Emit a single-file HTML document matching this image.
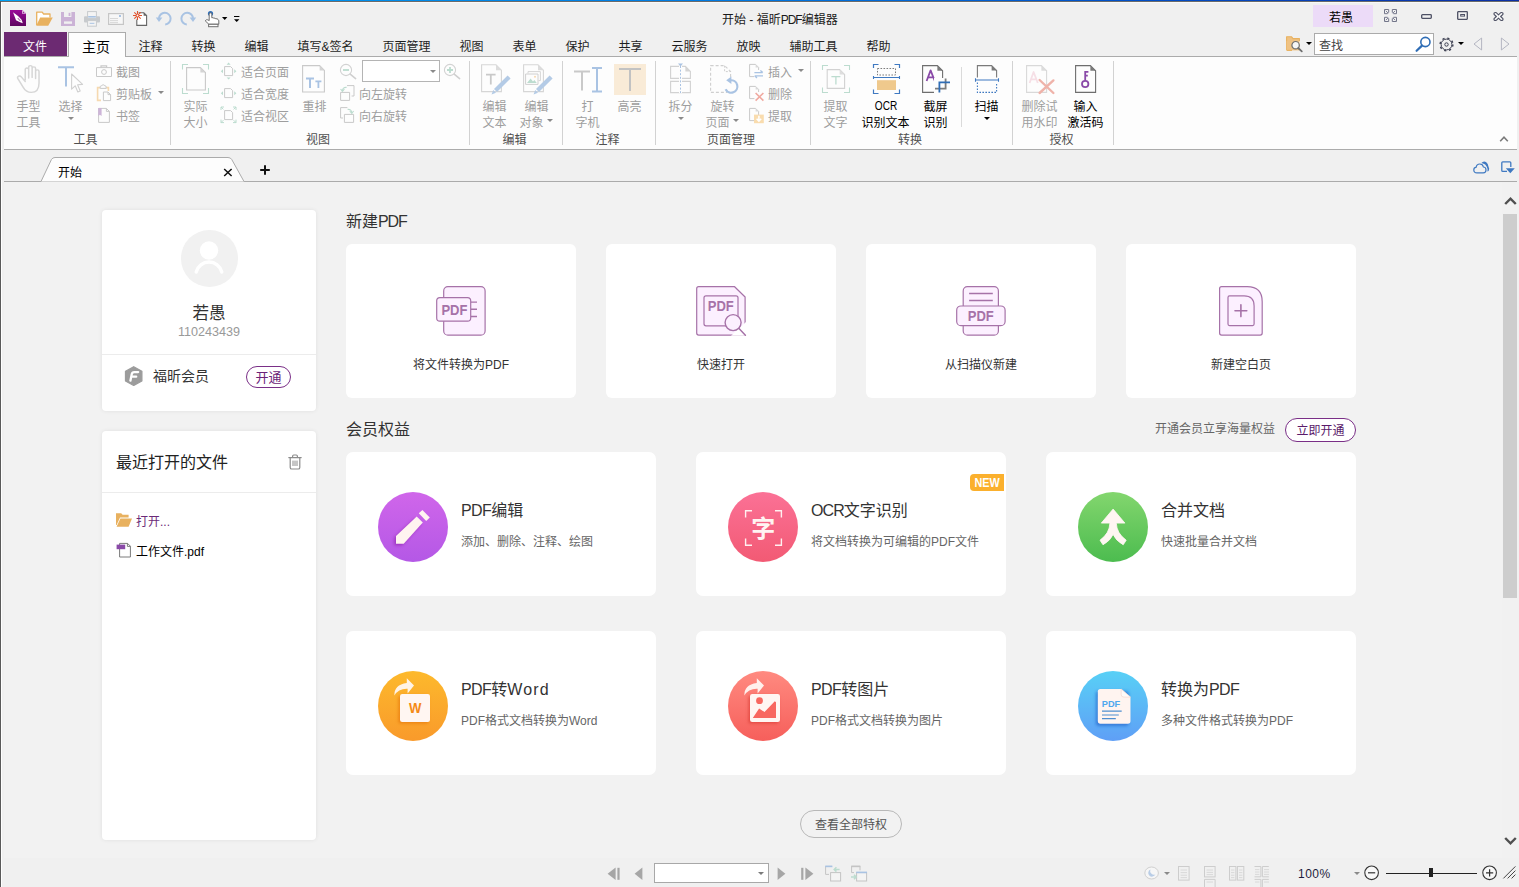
<!DOCTYPE html>
<html lang="zh-CN">
<head>
<meta charset="utf-8">
<title>开始 - 福昕PDF编辑器</title>
<style>
*{box-sizing:border-box;margin:0;padding:0}
html,body{width:1519px;height:887px;overflow:hidden;background:#f0f0f0}
body{font-family:"Liberation Sans","Noto Sans CJK SC",sans-serif;font-size:12px;color:#000}
#win{position:relative;width:1519px;height:887px;overflow:hidden;background:#f0f0f0}
.abs{position:absolute}
.t{position:absolute;white-space:nowrap;line-height:1}
svg{position:absolute;overflow:visible}
/* frame */
#topb{left:0;top:0;width:1519px;height:1px;background:linear-gradient(90deg,#00a2f5 0%,#0079e1 48%,#0050c8 74%,#0b2fa5 100%)}
#topw{left:1px;top:2px;width:1518px;height:1px;background:#f9f9f9}
#topg{left:0;top:1px;width:1519px;height:1px;background:#6b6b6b}
#leftg{left:0;top:1px;width:1px;height:886px;background:#5a5a5a}
#leftw{left:1px;top:2px;width:1px;height:885px;background:#fff}
/* tabs */
#filetab{left:4px;top:32px;width:63px;height:24px;background:#6c2a72}
#hometab{left:68px;top:32px;width:58px;height:25px;background:#fdfdfd;border:1px solid #ababab;border-bottom:none}
.tab{top:41px;font-size:12px;color:#1e1e1e;margin-left:0.5px}
/* ribbon */
#ribbon{left:4px;top:56px;width:1513px;height:94px;background:#fdfdfd;border-top:1px solid #ababab;border-bottom:1px solid #ababab}
.sep{width:1px;background:#d4d4d4;top:61px;height:84px}
.gl{top:134px;font-size:12px;color:#505050;transform:translateX(-50%)}
.rl{font-size:12px;color:#9e9e9e;transform:translateX(-50%);text-align:center;line-height:16px;top:98px}
.rl.on{color:#000}
.sl{font-size:12px;color:#9e9e9e}
.arr{width:0;height:0;border-left:3px solid transparent;border-right:3px solid transparent;border-top:3px solid #8a8a8a}
/* doc tabs */
#docline{left:4px;top:181px;width:1513px;height:1px;background:#ababab}
/* content */
#content{left:4px;top:182px;width:1498px;height:676px;background:#f2f2f2}
#sbar{left:1502px;top:182px;width:17px;height:676px;background:#f1f1f1}
#thumb{left:1503px;top:214px;width:14px;height:384px;background:#cdcdcd}
.card{position:absolute;background:#fff;border-radius:4px;box-shadow:0 0 4px rgba(0,0,0,.08)}
.ncard{position:absolute;background:#fff;border-radius:6px;width:230px;height:154px;top:244px}
.ncard .t{top:358px;font-size:12px;color:#333}
.fcard{position:absolute;background:#fff;border-radius:7px;width:310px;height:144px}
.h16{font-size:16px;color:#333}
.ft{font-size:16px;color:#333}
.fs{font-size:12px;color:#666}
.circ{position:absolute;width:70px;height:70px;border-radius:50%}
</style>
</head>
<body>
<div id="win">
<div class="abs" id="topb"></div><div class="abs" id="topg"></div><div class="abs" id="topw"></div><div class="abs" id="leftg"></div><div class="abs" id="leftw"></div>

<!-- TITLEBAR -->
<div class="t" style="left:722px;top:14px;font-size:12px;color:#1a1a1a">开始 - 福昕<span style="letter-spacing:-1px">PDF</span>编辑器</div>
<div class="abs" style="left:1313px;top:5px;width:60px;height:22px;background:#ecdbf8"></div>
<div class="t" style="left:1329px;top:12px;font-size:12px;color:#000">若愚</div>
<!-- quick access -->
<svg style="left:10px;top:10px" width="16" height="16" viewBox="0 0 16 16"><defs><linearGradient id="lg1" x1="0" y1="0" x2="0" y2="1"><stop offset="0" stop-color="#9a0a98"/><stop offset="1" stop-color="#5e0560"/></linearGradient></defs><path d="M0 0 H12.4 L16 3.6 V16 H0 Z" fill="url(#lg1)"/><path d="M12.2 0 V3.8 H16 Z" fill="#f4e6f4"/><path d="M12.9 1.4 V3.2 H14.7 Z" fill="#8a0a88"/><path d="M3 2.2 Q8.4 5.6 11.6 9.8 L12.8 13.2 L9.6 12 L6 10.2 Z" fill="#fff"/><path d="M7.8 8.2 L10.4 10.8" stroke="#b070b0" stroke-width="1.1"/></svg>
<svg style="left:36px;top:11px" width="17" height="15" viewBox="0 0 17 15"><path d="M0.7 14 V1.2 H6.2 L7.6 3 H14 V6.4" fill="#fff" stroke="#e8b15f" stroke-width="1.3" stroke-linejoin="round"/><path d="M4.2 6.6 H16.8 L12.2 14.8 H0.2 Z" fill="#e8b15f"/></svg>
<svg style="left:61px;top:12px" width="14" height="14" viewBox="0 0 14 14"><path d="M0 0 H14 V14 H0 Z" fill="#cbb2d6"/><rect x="3" y="0" width="7.4" height="5" fill="#f0f0f0"/><rect x="7.6" y="0.8" width="1.8" height="3.2" fill="#cbb2d6"/><rect x="3" y="9.4" width="8" height="2.4" fill="#f0f0f0"/></svg>
<svg style="left:84px;top:11px" width="16" height="16" viewBox="0 0 16 16"><rect x="0" y="5.2" width="16" height="6.4" rx="1" fill="#c7cacd"/><rect x="3.6" y="0.6" width="8.8" height="7" fill="#f4f4f4" stroke="#c7cacd" stroke-width="1"/><rect x="4.2" y="5" width="7.6" height="1.6" fill="#a9c3e3"/><rect x="3.6" y="9.6" width="8.8" height="5.6" fill="#f4f4f4" stroke="#c7cacd" stroke-width="1"/><rect x="5.6" y="11.8" width="4.8" height="1" fill="#a9c3e3"/></svg>
<svg style="left:108px;top:13px" width="16" height="12" viewBox="0 0 16 12"><rect x="0.6" y="0.6" width="14.8" height="10.8" fill="#f7f7f7" stroke="#c6c6c6" stroke-width="1.2"/><path d="M2 5.5 H10 M2 7.6 H10 M2 9.6 H10" stroke="#d4d4d4" stroke-width="0.9"/><rect x="11" y="2" width="2" height="2" fill="#a9c3e3"/></svg>
<svg style="left:133px;top:10px" width="15" height="17" viewBox="0 0 15 17"><path d="M5.6 2.8 H10.8 L13.6 5.6 V15.4 H3.8 V9.6" fill="#fff" stroke="#666" stroke-width="1.1"/><path d="M10.6 2.6 V5.8 H13.8 Z" fill="#666"/><rect x="0" y="1" width="9.6" height="9.6" fill="none"/><path d="M4.5 1 V10 M0 5.5 H9 M1.3 2.3 L7.7 8.7 M7.7 2.3 L1.3 8.7" stroke="#e0522d" stroke-width="1.1"/><circle cx="4.5" cy="5.5" r="0.9" fill="#fff"/></svg>
<svg style="left:155px;top:10px" width="18" height="17" viewBox="0 0 18 17"><path d="M4 8.6 A5.8 5.8 0 1 1 10.2 14.4" fill="none" stroke="#a9c3e3" stroke-width="2"/><path d="M0.8 7.6 H7.4 L4 12 Z" fill="#a9c3e3"/></svg>
<svg style="left:179px;top:10px" width="18" height="17" viewBox="0 0 18 17"><path d="M14 8.6 A5.8 5.8 0 1 0 7.8 14.4" fill="none" stroke="#a9c3e3" stroke-width="2"/><path d="M17.2 7.6 H10.6 L14 12 Z" fill="#a9c3e3"/></svg>
<svg style="left:204px;top:10px" width="16" height="18" viewBox="0 0 16 18"><circle cx="6.5" cy="3.5" r="2.6" fill="#2f6db5"/><path d="M5.2 10.6 V4.2 Q5.2 2.9 6.5 2.9 Q7.8 2.9 7.8 4.2 V7.8 Q9.2 7.2 9.8 8.2 Q11.2 7.8 11.8 8.8 Q13.2 8.4 14 9.4 Q14.8 10 14.8 11 V14.2 H4.8 L1.2 10.8 Q2.4 9.2 3.8 9.8 Z" fill="#fff" stroke="#707070" stroke-width="1" stroke-linejoin="round"/><rect x="4.6" y="14.3" width="9.4" height="2.4" fill="#fff" stroke="#707070" stroke-width="1"/></svg>
<svg style="left:222px;top:17px" width="6" height="3" viewBox="0 0 6 3"><path d="M0 0 H5.4 L2.7 3 Z" fill="#000"/></svg>
<svg style="left:234px;top:16px" width="6" height="7" viewBox="0 0 6 7"><path d="M0 0.5 H5.4" stroke="#000" stroke-width="1"/><path d="M0 3.2 H5.4 L2.7 6 Z" fill="#000"/></svg>

<!-- window controls -->
<svg style="left:1384px;top:9px" width="13" height="13" viewBox="0 0 13 13"><path d="M0.5 0.5 H4.7 V4.7 H0.5 Z M8.3 0.5 H12.5 V4.7 H8.3 Z M0.5 8.3 H4.7 V12.5 H0.5 Z M8.3 8.3 H12.5 V12.5 H8.3 Z" fill="none" stroke="#73768a" stroke-width="1"/><path d="M1.8 1.8 L4.4 4.4 M11.2 1.8 L8.6 4.4 M1.8 11.2 L4.4 8.6 M11.2 11.2 L8.6 8.6" fill="none" stroke="#73768a" stroke-width="0.9"/><path d="M3.6 5.2 H5.2 V3.6 M9.4 5.2 H7.8 V3.6 M3.6 7.8 H5.2 V9.4 M9.4 7.8 H7.8 V9.4" stroke="#f0f0f0" stroke-width="1.5" fill="none"/></svg>
<svg style="left:1421px;top:14px" width="11" height="5" viewBox="0 0 11 5"><rect x="0.7" y="0.7" width="9.6" height="3.6" rx="0.8" fill="none" stroke="#4d5064" stroke-width="1.3"/></svg>
<svg style="left:1457px;top:11px" width="11" height="9" viewBox="0 0 11 9"><rect x="0.7" y="0.7" width="9.6" height="7.6" rx="0.5" fill="none" stroke="#4d5064" stroke-width="1.3"/><rect x="3.7" y="3.5" width="3.8" height="1.6" fill="none" stroke="#4d5064" stroke-width="1"/></svg>
<svg style="left:1493px;top:12px" width="11" height="9" viewBox="0 0 13 10" preserveAspectRatio="none"><path d="M1.2 1.4 Q3 -0.4 4.8 1.6 L6.5 3.2 L8.2 1.6 Q10 -0.4 11.8 1.4 Q12.4 2.4 11 3.4 L9 5 L11 6.6 Q12.4 7.6 11.8 8.6 Q10 10.4 8.2 8.4 L6.5 6.8 L4.8 8.4 Q3 10.4 1.2 8.6 Q0.6 7.6 2 6.6 L4 5 L2 3.4 Q0.6 2.4 1.2 1.4 Z" fill="#f8f8f8" stroke="#4d5064" stroke-width="1.3" stroke-linejoin="round"/></svg>


<!-- TAB ROW -->
<div class="abs" id="filetab"></div>
<div class="t" style="left:23px;top:41px;font-size:12px;color:#fff">文件</div>
<div class="abs" id="hometab"></div>
<div class="t" style="left:82px;top:39.5px;font-size:14px;color:#000">主页</div>
<div class="t tab" style="left:138px">注释</div>
<div class="t tab" style="left:191px">转换</div>
<div class="t tab" style="left:244px">编辑</div>
<div class="t tab" style="left:297px">填写&amp;签名</div>
<div class="t tab" style="left:382px">页面管理</div>
<div class="t tab" style="left:459px">视图</div>
<div class="t tab" style="left:512px">表单</div>
<div class="t tab" style="left:565px">保护</div>
<div class="t tab" style="left:618px">共享</div>
<div class="t tab" style="left:671px">云服务</div>
<div class="t tab" style="left:736px">放映</div>
<div class="t tab" style="left:789px">辅助工具</div>
<div class="t tab" style="left:866px">帮助</div>
<!-- search area -->
<svg style="left:1286px;top:36px" width="17" height="16" viewBox="0 0 17 16"><path d="M0.6 14 V0.8 H5.6 L7 2.6 H13.4 V5" fill="#efc283" stroke="#e8b15f" stroke-width="1.1" stroke-linejoin="round"/><path d="M0.6 5 H13.4 V14.4 H0.6 Z" fill="#efc283"/><path d="M0.6 14.4 H6" stroke="#e8b15f" stroke-width="1.1"/><circle cx="9.6" cy="9.2" r="3.7" fill="#f6f6f6" stroke="#6e6e6e" stroke-width="1.2"/><path d="M12.2 12 L15.8 15.4" stroke="#6e6e6e" stroke-width="1.8" stroke-linecap="round"/></svg>
<svg style="left:1305.5px;top:42px" width="6" height="3" viewBox="0 0 6 3"><path d="M0 0 H6 L3 3 Z" fill="#000"/></svg>
<div class="abs" style="left:1314px;top:33px;width:120px;height:22px;background:#fff;border:1px solid #ababab"></div>
<div class="t" style="left:1319px;top:39.5px;font-size:12px;color:#444">查找</div>
<svg style="left:1415px;top:36px" width="17" height="16" viewBox="0 0 17 16"><circle cx="10.4" cy="6" r="4.6" fill="none" stroke="#2f6db5" stroke-width="1.6"/><path d="M7 9.6 L1.6 14.8" stroke="#2f6db5" stroke-width="2.2" stroke-linecap="round"/></svg>
<svg style="left:1439px;top:37px" width="15" height="15" viewBox="0 0 15 15"><circle cx="7.5" cy="7.5" r="5.4" fill="none" stroke="#3d4052" stroke-width="1"/><circle cx="7.5" cy="7.5" r="1.7" fill="none" stroke="#3d4052" stroke-width="1"/><circle cx="7.5" cy="7.5" r="6.4" fill="none" stroke="#3d4052" stroke-width="1.4" stroke-dasharray="2.2 2.83"/></svg>
<svg style="left:1457.5px;top:42px" width="6" height="3" viewBox="0 0 6 3"><path d="M0 0 H6 L3 3 Z" fill="#000"/></svg>
<svg style="left:1473px;top:37px" width="10" height="14" viewBox="0 0 10 14"><path d="M8.6 1 V13 L1 7 Z" fill="none" stroke="#b4b6c2" stroke-width="1"/></svg>
<svg style="left:1500px;top:37px" width="10" height="14" viewBox="0 0 10 14"><path d="M1.4 1 V13 L9 7 Z" fill="none" stroke="#b4b6c2" stroke-width="1"/></svg>


<!-- RIBBON -->
<div class="abs" id="ribbon"></div>
<div class="abs" style="left:69px;top:56px;width:56px;height:1px;background:#fdfdfd"></div>
<svg style="left:16px;top:64px" width="26" height="30" viewBox="0 0 26 30"><path transform="translate(-0.2,0) scale(1.15,1)" d="M8.2 16 V5.6 Q8.2 4 9.7 4 Q11.2 4 11.2 5.6 V14 M11.2 13 V3.2 Q11.2 1.6 12.7 1.6 Q14.2 1.6 14.2 3.2 V13 M14.2 13.4 V4.4 Q14.2 2.8 15.7 2.8 Q17.2 2.8 17.2 4.4 V14 M17.2 14.6 V7.4 Q17.2 5.8 18.7 5.8 Q20.2 5.8 20.2 7.4 V19 Q20.2 28.4 13.4 28.4 Q9 28.4 6.6 23.6 L1.8 14.6 Q1 13 2.4 12.2 Q3.8 11.6 5 13.2 L8.2 17.6" fill="none" stroke="#d6d6d6" stroke-width="1.3" stroke-linejoin="round" stroke-linecap="round"/></svg>
<div class="t rl" style="left:28.5px;top:99px">手型</div>
<div class="t rl" style="left:28.5px;top:114.5px">工具</div>
<svg style="left:57px;top:64px" width="28" height="30" viewBox="0 0 28 30"><path d="M1 3.2 H17 M9 3.2 V22.6" stroke="#a9c3e3" stroke-width="2" fill="none"/><path d="M14.6 10 L25.6 20.4 L20.6 20.8 L23.2 27 L20.8 28 L18.2 21.8 L14.6 25.2 Z" fill="#fdfdfd" stroke="#d0d0d0" stroke-width="1.1" stroke-linejoin="round"/></svg>
<div class="t rl" style="left:70.5px;top:99px">选择</div>
<svg style="left:67.5px;top:117px" width="6" height="3" viewBox="0 0 6 3"><path d="M0 0 H6 L3.0 3 Z" fill="#8a8a8a"/></svg>
<svg style="left:96px;top:65px" width="16" height="13" viewBox="0 0 16 13"><path d="M0.5 2.6 H15.5 V11.5 H0.5 Z" fill="none" stroke="#c9c9c9" stroke-width="1"/><path d="M5 2.4 V0.9 H10.6 V2.4" fill="none" stroke="#c9c9c9" stroke-width="1.2"/><circle cx="8" cy="7" r="2.4" fill="none" stroke="#c9c9c9" stroke-width="1"/></svg>
<div class="t sl" style="left:116px;top:67px;color:#9e9e9e">截图</div>
<svg style="left:96px;top:85px" width="16" height="17" viewBox="0 0 16 17"><path d="M4 2.6 H1.6 V15.4 H5" fill="none" stroke="#f6d9b0" stroke-width="1.6"/><path d="M10.4 2.6 H12.4 V6" fill="none" stroke="#f6d9b0" stroke-width="1.6"/><path d="M4.2 3.4 V1.8 Q4.2 0.8 5.6 0.8 Q6 -0.2 7.2 -0.2 Q8.4 -0.2 8.8 0.8 Q10.2 0.8 10.2 1.8 V3.4 Z" fill="#fdfdfd" stroke="#c9c9c9" stroke-width="1"/><path d="M7.4 7 H12 L14.6 9.6 V15.6 H7.4 Z" fill="#fdfdfd" stroke="#c9c9c9" stroke-width="1"/><path d="M12 7 V9.6 H14.6" fill="none" stroke="#c9c9c9" stroke-width="1"/></svg>
<div class="t sl" style="left:116px;top:89px;color:#9e9e9e">剪贴板</div>
<svg style="left:158px;top:91px" width="6" height="3" viewBox="0 0 6 3"><path d="M0 0 H6 L3.0 3 Z" fill="#8a8a8a"/></svg>
<svg style="left:97px;top:107px" width="14" height="17" viewBox="0 0 14 17"><path d="M1.6 1.4 H9.4 L12.4 4.4 V15.4 H1.6 Z" fill="none" stroke="#c9c9c9" stroke-width="1"/><path d="M9.4 1.4 V4.4 H12.4" fill="none" stroke="#c9c9c9" stroke-width="1"/><path d="M1.2 1 H4.6 V9 L2.9 7.8 L1.2 9 Z" fill="#cdb5d8"/></svg>
<div class="t sl" style="left:116px;top:111px;color:#9e9e9e">书签</div>
<div class="t gl" style="left:85.5px">工具</div>
<div class="abs sep" style="left:170px;top:61px;height:84px;background:#d2d2d2"></div>
<svg style="left:181px;top:63px" width="29" height="32" viewBox="0 0 29 32"><path d="M1.5 6.5 V1.5 H7 M22 1.5 H27.5 V6.5 M27.5 25 V30.5 H22 M7 30.5 H1.5 V25" fill="none" stroke="#bcdccf" stroke-width="1.1"/><path d="M5.6 4.6 H19.4 L24.4 9.6 V27 H5.6 Z" fill="none" stroke="#c9c9c9" stroke-width="1.1"/><path d="M19.4 4.6 V9.6 H24.4 Z" fill="#d4d4d4"/></svg>
<div class="t rl" style="left:195.5px;top:99px">实际</div>
<div class="t rl" style="left:195.5px;top:114.5px">大小</div>
<svg style="left:220px;top:62px" width="17" height="18" viewBox="0 0 17 18"><path d="M4.6 4.6 H10.6 L12.6 6.6 V13.6 H4.6 Z" fill="none" stroke="#c9c9c9" stroke-width="1"/><path d="M8.6 0.6 L10.6 2.8 H6.6 Z M8.6 17.6 L10.6 15.4 H6.6 Z M0.8 9.2 L3 7.2 V11.2 Z M16.4 9.2 L14.2 7.2 V11.2 Z" fill="#bcdccf"/></svg>
<div class="t sl" style="left:241px;top:67px;color:#9e9e9e">适合页面</div>
<svg style="left:220px;top:84px" width="17" height="18" viewBox="0 0 17 18"><path d="M4.6 4.6 H10.6 L12.6 6.6 V13.6 H4.6 Z" fill="none" stroke="#c9c9c9" stroke-width="1"/><path d="M0.8 9.2 L3 7.2 V11.2 Z M16.4 9.2 L14.2 7.2 V11.2 Z" fill="#bcdccf"/></svg>
<div class="t sl" style="left:241px;top:89px;color:#9e9e9e">适合宽度</div>
<svg style="left:220px;top:106px" width="17" height="18" viewBox="0 0 17 18"><path d="M4.6 4.6 H10.6 L12.6 6.6 V13.6 H4.6 Z" fill="none" stroke="#c9c9c9" stroke-width="1"/><path d="M1 4 V1 H4 M1 1 L3.4 3.4 M13 1 H16 V4 M16 1 L13.6 3.4 M16 13.6 V16.6 H13 M16 16.6 L13.6 14.2 M4 16.6 H1 V13.6 M1 16.6 L3.4 14.2" fill="none" stroke="#bcdccf" stroke-width="1"/></svg>
<div class="t sl" style="left:241px;top:111px;color:#9e9e9e">适合视区</div>
<svg style="left:301px;top:64px" width="25" height="30" viewBox="0 0 25 30"><path d="M1.6 1.6 H18.6 L23.4 6.4 V28 H1.6 Z" fill="none" stroke="#c9c9c9" stroke-width="1.1"/><path d="M18.6 1.6 V6.4 H23.4 Z" fill="#d4d4d4"/><path d="M5 14.4 H13 M9 14.4 V24" stroke="#a9c3e3" stroke-width="2" fill="none"/><path d="M14.4 17.4 H20.4 M17.4 17.4 V24" stroke="#a9c3e3" stroke-width="1.8" fill="none"/></svg>
<div class="t rl" style="left:314.5px;top:99px">重排</div>
<svg style="left:339px;top:63px" width="18" height="17" viewBox="0 0 18 17"><circle cx="7" cy="7" r="5.6" fill="none" stroke="#d2d2d2" stroke-width="1.1"/><path d="M11.2 11.2 L16.6 15.6" stroke="#cfcfcf" stroke-width="1.6" stroke-linecap="round"/><path d="M4 7 H10" stroke="#bcdccf" stroke-width="1.8"/></svg>
<div class="abs" style="left:362px;top:60px;width:78px;height:22px;background:#fff;border:1px solid #b4b4b4"></div>
<svg style="left:430px;top:70px" width="6" height="3" viewBox="0 0 6 3"><path d="M0 0 H6 L3.0 3 Z" fill="#8a8a8a"/></svg>
<svg style="left:443px;top:63px" width="18" height="17" viewBox="0 0 18 17"><circle cx="7" cy="7" r="5.6" fill="none" stroke="#d2d2d2" stroke-width="1.1"/><path d="M11.2 11.2 L16.6 15.6" stroke="#cfcfcf" stroke-width="1.6" stroke-linecap="round"/><path d="M4 7 H10 M7 4 V10" stroke="#bcdccf" stroke-width="1.8"/></svg>
<svg style="left:339px;top:84px" width="17" height="18" viewBox="0 0 17 18"><path d="M8 1.6 H15 V12 H12.6" fill="none" stroke="#c9c9c9" stroke-width="1"/><path d="M1.6 8.4 H10.6 V16.4 H1.6 Z" fill="#fdfdfd" stroke="#c9c9c9" stroke-width="1"/><path d="M7.6 3.4 Q3.6 3 3.4 7" fill="none" stroke="#bcdccf" stroke-width="1.1"/><path d="M1.6 5 L3.4 7.4 L5.4 5.2" fill="none" stroke="#bcdccf" stroke-width="1.1"/></svg>
<div class="t sl" style="left:359px;top:89px;color:#9e9e9e">向左旋转</div>
<svg style="left:339px;top:106px" width="17" height="18" viewBox="0 0 17 18"><path d="M8.4 1.6 H1.6 V12 H4" fill="none" stroke="#c9c9c9" stroke-width="1"/><path d="M5.4 8.4 H14.6 V16.4 H5.4 Z" fill="#fdfdfd" stroke="#c9c9c9" stroke-width="1"/><path d="M8.6 3.4 Q12.6 3 12.8 7" fill="none" stroke="#bcdccf" stroke-width="1.1"/><path d="M14.6 5 L12.8 7.4 L10.8 5.2" fill="none" stroke="#bcdccf" stroke-width="1.1"/></svg>
<div class="t sl" style="left:359px;top:111px;color:#9e9e9e">向右旋转</div>
<div class="t gl" style="left:318px">视图</div>
<div class="abs sep" style="left:469px;top:61px;height:84px;background:#d2d2d2"></div>
<svg style="left:480px;top:63px" width="31" height="32" viewBox="0 0 31 32"><path d="M1.6 1.8 H16 L21.4 7.2 V28.6 H1.6 Z" fill="none" stroke="#d6d6d6" stroke-width="1.1"/><path d="M16 1.8 V7.2 H21.4 Z" fill="#dcdcdc"/><path d="M6 11.6 H15.6 M10.8 11.6 V21.6" stroke="#c9c9c9" stroke-width="1.8" fill="none"/><g transform="translate(11.6,12.4)"><path d="M16 0 L19 3 L5.4 16.6 L2.4 13.6 Z" fill="#b4cbe6"/><path d="M1.6 14.6 L4.4 17.4 L0 19 Z" fill="#b4cbe6"/></g></svg>
<div class="t rl" style="left:494.5px;top:99px">编辑</div>
<div class="t rl" style="left:494.5px;top:114.5px">文本</div>
<svg style="left:522px;top:63px" width="31" height="32" viewBox="0 0 31 32"><path d="M1.6 1.8 H16 L21.4 7.2 V28.6 H1.6 Z" fill="none" stroke="#d6d6d6" stroke-width="1.1"/><path d="M16 1.8 V7.2 H21.4 Z" fill="#dcdcdc"/><path d="M6 10.4 V8.6 H18.4 V17.6 H16.6" fill="none" stroke="#d6d6d6" stroke-width="1"/><path d="M3.6 11 H16 V21.4 H3.6 Z" fill="#fdfdfd" stroke="#d0d0d0" stroke-width="1"/><path d="M5 20 L8.6 15.6 L11 18.4 L12.4 17 L14.8 20 Z" fill="#bcdccf"/><circle cx="13" cy="13.8" r="1" fill="#f6d9b0"/><g transform="translate(11.6,12.4)"><path d="M16 0 L19 3 L5.4 16.6 L2.4 13.6 Z" fill="#b4cbe6"/><path d="M1.6 14.6 L4.4 17.4 L0 19 Z" fill="#b4cbe6"/></g></svg>
<div class="t rl" style="left:536.5px;top:99px">编辑</div>
<div class="t rl" style="left:531.5px;top:114.5px">对象</div>
<svg style="left:546.5px;top:119px" width="6" height="3" viewBox="0 0 6 3"><path d="M0 0 H6 L3.0 3 Z" fill="#8a8a8a"/></svg>
<div class="t gl" style="left:514.5px">编辑</div>
<div class="abs sep" style="left:562px;top:61px;height:84px;background:#d2d2d2"></div>
<svg style="left:573px;top:66px" width="31" height="27" viewBox="0 0 31 27"><path d="M1 5.4 H17 M9 5.4 V24.6" stroke="#c9c9c9" stroke-width="2" fill="none"/><path d="M19 2 H29 M19 25.4 H29 M24 2 V25.4" stroke="#a9c3e3" stroke-width="2" fill="none"/></svg>
<div class="t rl" style="left:587.5px;top:99px">打</div>
<div class="t rl" style="left:587.5px;top:114.5px">字机</div>
<div class="abs" style="left:614px;top:64px;width:32px;height:31px;background:#f9ebd7"></div>
<svg style="left:618px;top:67px" width="24" height="25" viewBox="0 0 24 25"><path d="M1 2 H23 M12 2 V24" stroke="#c2c2c2" stroke-width="2" fill="none"/></svg>
<div class="t rl" style="left:629.5px;top:99px">高亮</div>
<div class="t gl" style="left:607.5px">注释</div>
<div class="abs sep" style="left:655px;top:61px;height:84px;background:#d2d2d2"></div>
<svg style="left:669px;top:63px" width="23" height="31" viewBox="0 0 23 31"><path d="M1.6 3.4 H16.4 L21.4 8.4 V15.4 H1.6 Z" fill="none" stroke="#d2d2d2" stroke-width="1.1"/><path d="M16.4 3.4 V8.4 H21.4 Z" fill="#d4d4d4"/><path d="M1.6 18.4 H21.4 V29.6 H1.6 Z" fill="none" stroke="#d2d2d2" stroke-width="1.1"/><path d="M11.5 3 V30" stroke="#fdfdfd" stroke-width="3"/><path d="M11.5 3 V30" stroke="#a9c3e3" stroke-width="1" stroke-dasharray="2 1.6"/><path d="M9 0.6 H14 L11.5 3.2 Z" fill="#a9c3e3"/></svg>
<div class="t rl" style="left:680.5px;top:99px">拆分</div>
<svg style="left:677.5px;top:117px" width="6" height="3" viewBox="0 0 6 3"><path d="M0 0 H6 L3.0 3 Z" fill="#8a8a8a"/></svg>
<svg style="left:709px;top:64px" width="31" height="31" viewBox="0 0 31 31"><path d="M1.6 1.6 H15.6 L21.6 7.6 V28.4 H1.6 Z" fill="none" stroke="#cfcfcf" stroke-width="1.1" stroke-dasharray="3 2"/><path d="M15.6 1.6 V7.6 H21.6" fill="none" stroke="#cfcfcf" stroke-width="1" stroke-dasharray="2 1.6"/><circle cx="22.4" cy="22.6" r="7.4" fill="#fdfdfd"/><path d="M21 16.4 A6.2 6.2 0 1 1 16.6 25.2" fill="none" stroke="#a9c3e3" stroke-width="2.2"/><path d="M22.4 12.4 L17.2 16.2 L22.4 20 Z" fill="#a9c3e3"/></svg>
<div class="t rl" style="left:722.5px;top:99px">旋转</div>
<div class="t rl" style="left:717.5px;top:114.5px">页面</div>
<svg style="left:732.5px;top:119px" width="6" height="3" viewBox="0 0 6 3"><path d="M0 0 H6 L3.0 3 Z" fill="#8a8a8a"/></svg>
<svg style="left:748px;top:63px" width="16" height="16" viewBox="0 0 16 16"><path d="M1.6 1.4 H7.6 L10.6 4.4 V13.6 H1.6 Z" fill="none" stroke="#c9c9c9" stroke-width="1"/><path d="M7.6 1.4 V4.4 H10.6 Z" fill="#d9d9d9"/><rect x="6" y="7" width="10" height="9" fill="#fdfdfd"/><path d="M6.4 9.6 H14.6 M12.4 7.4 L14.8 9.6 M15 12.8 H6.8 M9 15 L6.6 12.8" fill="none" stroke="#a9c3e3" stroke-width="1.3"/></svg>
<div class="t sl" style="left:768px;top:67px;color:#9e9e9e">插入</div>
<svg style="left:797.5px;top:69px" width="6" height="3" viewBox="0 0 6 3"><path d="M0 0 H6 L3.0 3 Z" fill="#8a8a8a"/></svg>
<svg style="left:748px;top:85px" width="16" height="17" viewBox="0 0 16 17"><path d="M1.6 1.4 H7.6 L10.6 4.4 V13.6 H1.6 Z" fill="none" stroke="#c9c9c9" stroke-width="1"/><path d="M7.6 1.4 V4.4 H10.6 Z" fill="#d9d9d9"/><rect x="6.4" y="7" width="10" height="9.6" fill="#fdfdfd"/><path d="M7.6 8 L15.4 15.6 M15.4 8 L7.6 15.6" stroke="#f0a9a0" stroke-width="1.6"/></svg>
<div class="t sl" style="left:768px;top:89px;color:#9e9e9e">删除</div>
<svg style="left:748px;top:107px" width="16" height="17" viewBox="0 0 16 17"><path d="M1.6 1.4 H7.6 L10.6 4.4 V13.6 H1.6 Z" fill="none" stroke="#c9c9c9" stroke-width="1"/><path d="M7.6 1.4 V4.4 H10.6 Z" fill="#d9d9d9"/><rect x="6" y="7.6" width="9.8" height="8.6" fill="#f9dcae"/><path d="M10.9 8.8 V14 M8.6 11.8 L10.9 14.2 L13.2 11.8" fill="none" stroke="#fff" stroke-width="1.5"/></svg>
<div class="t sl" style="left:768px;top:111px;color:#9e9e9e">提取</div>
<div class="t gl" style="left:731px">页面管理</div>
<div class="abs sep" style="left:810px;top:61px;height:84px;background:#d2d2d2"></div>
<svg style="left:821px;top:64px" width="30" height="30" viewBox="0 0 30 30"><path d="M1.5 6 V1.5 H7 M23 1.5 H28.5 V6 M28.5 23.5 V28.5 H23 M7 28.5 H1.5 V23.5" fill="none" stroke="#bcdccf" stroke-width="1.1"/><path d="M6.2 5.6 H18.6 L23.6 10.6 V24.4 H6.2 Z" fill="none" stroke="#d2d2d2" stroke-width="1.1"/><path d="M18.6 5.6 V10.6 H23.6 Z" fill="#dedede"/><path d="M10.4 12.6 H19.4 M14.9 12.6 V20.6" stroke="#bcdccf" stroke-width="1.3" fill="none"/></svg>
<div class="t rl" style="left:835.5px;top:99px">提取</div>
<div class="t rl" style="left:835.5px;top:114.5px">文字</div>
<svg style="left:872px;top:63px" width="29" height="32" viewBox="0 0 29 32"><path d="M1.5 5 V1.5 H6.5 M22.5 1.5 H27.5 V5 M27.5 26.5 V30.5 H22.5 M6.5 30.5 H1.5 V26.5" fill="none" stroke="#3f79c1" stroke-width="1.2"/><path d="M5.5 5.5 H23.5 V12 H5.5 Z" fill="none" stroke="#7d7d7d" stroke-width="1" stroke-dasharray="1.6 1.4"/><path d="M1 14.5 H28 M1.5 13 V16 M27.5 13 V16" stroke="#3f79c1" stroke-width="1.1" fill="none"/><rect x="5" y="17.2" width="19" height="9.8" fill="#efc98d"/></svg>
<div class="t rl on" style="left:886px;top:98px;transform:translateX(-50%) scaleX(0.84)">OCR</div>
<div class="t rl on" style="left:885.5px;top:114.5px">识别文本</div>
<svg style="left:921px;top:64px" width="30" height="30" viewBox="0 0 30 30"><path d="M1.6 1.6 H16.4 L21.6 6.8 V28.4 H1.6 Z" fill="#fdfdfd" stroke="#6e6e6e" stroke-width="1.1"/><path d="M16.4 1.6 V6.8 H21.6 Z" fill="#7a7a7a"/><path d="M5.6 17 L9.6 6.4 L13.8 17 M7 13.4 H12.4" fill="none" stroke="#8a4aa8" stroke-width="1.8" stroke-linejoin="round"/><rect x="13" y="14" width="17" height="16" fill="#fdfdfd"/><path d="M14 24.6 H24.6 V14.6" fill="none" stroke="#7d7d7d" stroke-width="1.8"/><path d="M18.4 28.6 V18.4 H29" fill="none" stroke="#2f6db5" stroke-width="1.8"/></svg>
<div class="t rl on" style="left:935.5px;top:99px">截屏</div>
<div class="t rl on" style="left:935.5px;top:114.5px">识别</div>
<div class="abs sep" style="left:961px;top:67px;height:60px;background:#dadada"></div>
<svg style="left:974px;top:64px" width="26" height="30" viewBox="0 0 26 30"><path d="M3.4 13.6 V1.6 H17.6 L22.6 6.6 V13.6" fill="none" stroke="#7a7a7a" stroke-width="1.1"/><path d="M17.6 1.6 V6.6 H22.6 Z" fill="#7a7a7a"/><path d="M1 16 H25 M1.5 14.2 V17.8 M24.5 14.2 V17.8" stroke="#3f79c1" stroke-width="1.1" fill="none"/><path d="M3.4 18.4 V28.4 H22.6 V18.4" fill="none" stroke="#3f79c1" stroke-width="1.1" stroke-dasharray="1.6 1.4"/></svg>
<div class="t rl on" style="left:986.5px;top:99px">扫描</div>
<svg style="left:983.5px;top:117px" width="6" height="3" viewBox="0 0 6 3"><path d="M0 0 H6 L3.0 3 Z" fill="#000"/></svg>
<div class="t gl" style="left:910px">转换</div>
<div class="abs sep" style="left:1012px;top:61px;height:84px;background:#d2d2d2"></div>
<svg style="left:1025px;top:64px" width="30" height="31" viewBox="0 0 30 31"><path d="M1.6 1.6 H16.4 L21.6 6.8 V28.4 H1.6 Z" fill="none" stroke="#d9d9d9" stroke-width="1.1"/><path d="M16.4 1.6 V6.8 H21.6 Z" fill="#dcdcdc"/><path d="M4.6 19 L8.6 8 L12.8 19 M6 15.4 H11.4" fill="none" stroke="#f6dfe6" stroke-width="1.8" stroke-linejoin="round"/><path d="M14.6 16 L28.4 29 M28.4 16.4 L14.6 29" stroke="#efb3aa" stroke-width="2.4" stroke-linecap="round"/></svg>
<div class="t rl" style="left:1039.5px;top:99px">删除试</div>
<div class="t rl" style="left:1039.5px;top:114.5px">用水印</div>
<svg style="left:1074px;top:64px" width="23" height="30" viewBox="0 0 23 30"><path d="M1.6 1.6 H16.4 L21.6 6.8 V28.4 H1.6 Z" fill="#fdfdfd" stroke="#6e6e6e" stroke-width="1.1"/><path d="M16.4 1.6 V6.8 H21.6 Z" fill="#7a7a7a"/><circle cx="11.2" cy="20" r="3.2" fill="none" stroke="#8a4aa8" stroke-width="1.8"/><path d="M11.2 16.8 V7.8 H14.4 M11.2 11.6 H13.8" fill="none" stroke="#8a4aa8" stroke-width="1.8"/></svg>
<div class="t rl on" style="left:1085.5px;top:99px">输入</div>
<div class="t rl on" style="left:1085.5px;top:114.5px">激活码</div>
<div class="t gl" style="left:1061.5px">授权</div>
<div class="abs sep" style="left:1113px;top:61px;height:84px;background:#d2d2d2"></div>
<svg style="left:1499px;top:135px" width="10" height="8" viewBox="0 0 10 8"><path d="M1.2 6.2 L5 2.2 L8.8 6.2" fill="none" stroke="#7a7a7a" stroke-width="1.6"/></svg>


<!-- DOC TABS -->
<div class="abs" id="docline"></div>
<!-- doc tab -->
<svg style="left:38px;top:155px" width="210" height="28" viewBox="0 0 210 28"><path d="M3 26.5 L13.4 4.6 Q14.6 2.5 17 2.5 H190 Q192.6 2.5 193.8 4.6 L206 26.5" fill="#fdfdfd" stroke="#ababab" stroke-width="1"/></svg>
<div class="t" style="left:58px;top:167px;font-size:12px;color:#000">开始</div>
<svg style="left:223px;top:168px" width="10" height="9" viewBox="0 0 10 9"><path d="M1.2 1 L8.6 8 M8.6 1 L1.2 8" stroke="#111" stroke-width="1.5"/></svg>
<svg style="left:260px;top:165px" width="10" height="10" viewBox="0 0 10 10"><path d="M5 0.2 V9.8 M0.2 5 H9.8" stroke="#111" stroke-width="2"/></svg>
<svg style="left:1473px;top:161px" width="18" height="13" viewBox="0 0 18 13"><path d="M8.4 2 Q10.4 -0.4 13 1 Q15.6 3 15.6 6 Q16.8 7.4 15.6 10 L14.4 10.4 Q15 7.8 13.6 5.6 Q12.6 3 10 2.4 Z" fill="#3f79c1"/><path d="M4 11.8 Q0.8 11.8 0.8 9 Q0.8 6.6 3.2 6.2 Q3.6 3 6.8 3 Q9.8 3 10.4 6 Q13 6 13 9 Q13 11.8 10.2 11.8 Z" fill="#f0f0f0" stroke="#3f79c1" stroke-width="1.2"/></svg>
<svg style="left:1501px;top:161px" width="14" height="13" viewBox="0 0 14 13"><path d="M6 10.4 H1.8 Q0.8 10.4 0.8 9.4 V1.8 Q0.8 0.8 1.8 0.8 H8.8 Q9.8 0.8 9.8 1.8 V6" fill="none" stroke="#3f79c1" stroke-width="1.3"/><path d="M4.8 7.2 H13.8 L9.3 12.2 Z" fill="#3f79c1"/></svg>


<!-- CONTENT -->
<div class="abs" id="content"></div>
<div class="abs" id="sbar"></div><div class="abs" id="thumb"></div>
<!-- LEFT PANEL -->
<div class="card" style="left:102px;top:210px;width:214px;height:201px"></div>
<div class="abs" style="left:181px;top:230.4px;width:56.6px;height:56.6px;border-radius:50%;background:#f1f1f1"></div>
<svg style="left:181.3px;top:230.6px" width="56" height="56" viewBox="0 0 56 56"><circle cx="28" cy="19.5" r="9.2" fill="#fff"/><path d="M15.2 41 A13.2 13.2 0 0 1 40.8 41" fill="none" stroke="#fff" stroke-width="3.4" stroke-linecap="round"/></svg>
<div class="t" style="left:209px;top:305px;font-size:16.5px;color:#333;transform:translateX(-50%)">若愚</div>
<div class="t" style="left:209px;top:326px;font-size:12.6px;color:#999;transform:translateX(-50%)">110243439</div>
<div class="abs" style="left:102px;top:354px;width:214px;height:1px;background:#ececec"></div>
<svg style="left:124.3px;top:365.8px" width="19.4" height="20.2" viewBox="0 0 20 22" preserveAspectRatio="none"><path d="M10 0.8 L18.4 5.7 V16.3 L10 21.2 L1.6 16.3 V5.7 Z" fill="#9c9c9c" stroke="#9c9c9c" stroke-width="1.4" stroke-linejoin="round"/><path d="M14.6 6.6 H10.6 Q8.4 6.6 8 8.8 L6.6 16 M7.4 11.6 H12.6" fill="none" stroke="#fff" stroke-width="2.4" stroke-linecap="round" stroke-linejoin="round"/></svg>
<div class="t" style="left:153px;top:369px;font-size:14px;color:#333">福昕会员</div>
<div class="abs" style="left:246px;top:366px;width:45px;height:22px;border:1px solid #7a2f87;border-radius:11px;background:#fff"></div>
<div class="t" style="left:268.5px;top:371px;font-size:13px;color:#6a2278;transform:translateX(-50%)">开通</div>

<div class="card" style="left:102px;top:431px;width:214px;height:409px"></div>
<div class="t" style="left:116px;top:455px;font-size:16px;color:#222">最近打开的文件</div>
<svg style="left:288px;top:454px" width="14" height="16" viewBox="0 0 14 16"><path d="M0.8 3.6 H13.2 M4.6 3.4 V2.2 Q4.6 1 5.8 1 H8.2 Q9.4 1 9.4 2.2 V3.4 M2.2 3.8 V13.4 Q2.2 15 3.8 15 H10.2 Q11.8 15 11.8 13.4 V3.8" fill="none" stroke="#8c8c8c" stroke-width="1.2" stroke-linecap="round"/><path d="M5 6.6 V12 M7 6.6 V12 M9 6.6 V12" stroke="#8c8c8c" stroke-width="1" fill="none"/></svg>
<div class="abs" style="left:102px;top:492px;width:214px;height:1px;background:#ececec"></div>
<svg style="left:116px;top:513px" width="16" height="14" viewBox="0 0 16 14"><path d="M0 0.2 H5.2 L6.6 1.8 H12.6 V4.6 H4 L0.6 12 H0 Z" fill="#e8b15f"/><path d="M4.4 5.6 H16 L12.6 13.8 H0.6 Z" fill="#e8b15f"/></svg>
<div class="t" style="left:136px;top:516px;font-size:12px;color:#6b2a78">打开...</div>
<svg style="left:116px;top:542px" width="16" height="16" viewBox="0 0 16 16"><path d="M3.6 1.4 H11.6 L14.4 4.2 V15 H3.6 Z" fill="#fff" stroke="#7a7a7a" stroke-width="1"/><path d="M11.4 1.4 V4.4 H14.4" fill="none" stroke="#7a7a7a" stroke-width="1"/><rect x="0.6" y="2.6" width="8.6" height="4.6" fill="#8a4aa8"/></svg>
<div class="t" style="left:136px;top:546px;font-size:12px;color:#000">工作文件.pdf</div>

<!-- MAIN -->
<div class="t h16" style="left:346px;top:213.5px">新建<span style="letter-spacing:-1.1px">PDF</span></div>
<div class="ncard" style="left:346px"></div>
<div class="ncard" style="left:606px"></div>
<div class="ncard" style="left:866px"></div>
<div class="ncard" style="left:1126px"></div>
<div class="t" style="left:461px;top:358.7px;font-size:12px;color:#333;transform:translateX(-50%)">将文件转换为PDF</div>
<div class="t" style="left:721px;top:358.7px;font-size:12px;color:#333;transform:translateX(-50%)">快速打开</div>
<div class="t" style="left:981px;top:358.7px;font-size:12px;color:#333;transform:translateX(-50%)">从扫描仪新建</div>
<div class="t" style="left:1241px;top:358.7px;font-size:12px;color:#333;transform:translateX(-50%)">新建空白页</div>
<!-- new pdf icons -->
<svg style="left:430px;top:280px" width="62" height="62" viewBox="430 280 62 62" font-family="'Liberation Sans',sans-serif" font-weight="bold">
<rect x="443.7" y="286.7" width="41.4" height="48.4" rx="4.2" fill="#fcf0ff" stroke="#a672a8" stroke-width="1.2"/>
<path d="M470.8 302.1 H477 M470.8 309.3 H477 M470.8 316.5 H477" stroke="#a672a8" stroke-width="1.4"/>
<rect x="436.7" y="297.6" width="34" height="23.6" rx="3.2" fill="#fcf0ff" stroke="#a672a8" stroke-width="1.2"/>
<text x="441.4" y="314.7" font-size="15" fill="#a672a8" textLength="26" lengthAdjust="spacingAndGlyphs">PDF</text>
</svg>
<svg style="left:690px;top:280px" width="62" height="62" viewBox="690 280 62 62" font-family="'Liberation Sans',sans-serif" font-weight="bold">
<path d="M698.7 286.7 H734.6 L745.1 297 V335.1 H698.7 Q696.7 335.1 696.7 333.1 V288.7 Q696.7 286.7 698.7 286.7 Z" fill="#fcf0ff" stroke="#a672a8" stroke-width="1.2" stroke-linejoin="round"/>
<rect x="704" y="295.8" width="34" height="30" rx="2" fill="#fcf0ff" stroke="#a672a8" stroke-width="1.2"/>
<text x="707.8" y="310.7" font-size="14" fill="#a672a8" textLength="26" lengthAdjust="spacingAndGlyphs">PDF</text>
<path d="M731 335.8 H746 V322 Z" fill="#fff"/>
<circle cx="733.1" cy="322.6" r="8" fill="#fcf0ff" stroke="#a672a8" stroke-width="1.4"/>
<path d="M739 328.6 L745.4 335.2" stroke="#a672a8" stroke-width="1.5" stroke-linecap="round"/>
</svg>
<svg style="left:950px;top:280px" width="62" height="62" viewBox="950 280 62 62" font-family="'Liberation Sans',sans-serif" font-weight="bold">
<rect x="963.2" y="286.7" width="35.2" height="48.4" rx="4.2" fill="#fcf0ff" stroke="#a672a8" stroke-width="1.2"/>
<path d="M969.1 293.5 H992.8 M969.1 300.6 H992.8" stroke="#a672a8" stroke-width="1.5"/>
<rect x="956.7" y="306" width="48.4" height="19.6" rx="4.2" fill="#fcf0ff" stroke="#a672a8" stroke-width="1.2"/>
<text x="967.8" y="320.8" font-size="14" fill="#a672a8" textLength="26" lengthAdjust="spacingAndGlyphs">PDF</text>
</svg>
<svg style="left:1210px;top:280px" width="62" height="62" viewBox="1210 280 62 62">
<path d="M1221.6 286.7 H1247.2 Q1262.2 286.7 1262.2 301.7 V333.1 Q1262.2 335.1 1260.2 335.1 H1221.6 Q1219.6 335.1 1219.6 333.1 V288.7 Q1219.6 286.7 1221.6 286.7 Z" fill="#fcf0ff" stroke="#a672a8" stroke-width="1.2"/>
<path d="M1229.5 295.9 H1244.1 Q1254.1 295.9 1254.1 305.9 V324.1 Q1254.1 325.6 1252.6 325.6 H1229.5 Q1228 325.6 1228 324.1 V297.4 Q1228 295.9 1229.5 295.9 Z" fill="#fcf0ff" stroke="#a672a8" stroke-width="1.2"/>
<path d="M1235 310.7 H1246.8 M1240.9 304.8 V316.6" stroke="#a672a8" stroke-width="1.6" stroke-linecap="round"/>
</svg>


<div class="t h16" style="left:346px;top:421.5px">会员权益</div>
<div class="t" style="left:1155px;top:423.3px;font-size:12px;color:#666">开通会员立享海量权益</div>
<div class="abs" style="left:1285px;top:418px;width:71px;height:24px;border:1px solid #7a2f87;border-radius:12px;background:#fff"></div>
<div class="t" style="left:1320.5px;top:425.3px;font-size:12px;color:#5a1a6a;transform:translateX(-50%)">立即开通</div>

<div class="fcard" style="left:346px;top:452px"></div>
<div class="fcard" style="left:696px;top:452px"></div>
<div class="fcard" style="left:1046px;top:452px"></div>
<div class="fcard" style="left:346px;top:631px"></div>
<div class="fcard" style="left:696px;top:631px"></div>
<div class="fcard" style="left:1046px;top:631px"></div>

<div class="circ" style="left:378px;top:492px;background:linear-gradient(180deg,#d066ea,#b458e6)"></div>
<div class="circ" style="left:728px;top:492px;background:linear-gradient(180deg,#fb7196,#f25a74)"></div>
<div class="circ" style="left:1078px;top:492px;background:linear-gradient(180deg,#83d66e,#4cbc4f)"></div>
<div class="circ" style="left:378px;top:671px;background:linear-gradient(180deg,#fdb92c,#f99a2b)"></div>
<div class="circ" style="left:728px;top:671px;background:linear-gradient(180deg,#ff8a80,#f65f5b)"></div>
<div class="circ" style="left:1078px;top:671px;background:linear-gradient(180deg,#58d0f6,#5f9ff6)"></div>
<svg style="left:0;top:0" width="0" height="0"><defs><filter id="sh1" x="-40%" y="-40%" width="180%" height="180%"><feGaussianBlur stdDeviation="1.8"/></filter></defs></svg>
<!-- feature icons -->
<svg style="left:378px;top:492px" width="70" height="70" viewBox="378 492 70 70">
<path d="M394.2 545.4 V537.6 L415 518.2 L421.2 524.2 L402 545.4 Z" fill="#8c1fa8" opacity=".6" filter="url(#sh1)"/>
<path d="M396 543.8 V536.1 L416.7 516.6 L422.8 522.6 L403.7 543.8 Z" fill="#fff4f0"/>
<path d="M418.8 513.3 L422.4 510 L429.8 517.5 L426.2 521.1 Z" fill="#fff4f0"/>
</svg>
<svg style="left:728px;top:492px" width="70" height="70" viewBox="728 492 70 70" font-family="'Liberation Sans','Noto Sans CJK SC',sans-serif">
<path d="M745.6 517.4 V510.7 H752 M775 510.7 H781.4 V517.4 M781.4 538.6 V545.3 H775 M752 545.3 H745.6 V538.6" fill="none" stroke="#fff0f0" stroke-width="1.4"/>
<text x="763.2" y="536.8" font-size="24" font-weight="bold" fill="#fff4f2" text-anchor="middle">字</text>
</svg>
<svg style="left:1078px;top:492px" width="70" height="70" viewBox="1078 492 70 70">
<path d="M1113.1 509.1 L1124.9 523.1 H1116.3 Q1116.6 533.4 1126.2 540.2 L1123.2 544.8 Q1115.6 540.4 1113.1 534.4 Q1110.6 540.4 1103 544.8 L1100 540.2 Q1109.6 533.4 1109.9 523.1 H1101.3 Z" fill="#fff6f2" stroke="#fff6f2" stroke-width="0.8" stroke-linejoin="round"/>
</svg>
<svg style="left:378px;top:671px" width="70" height="70" viewBox="378 671 70 70" font-family="'Liberation Sans',sans-serif">
<rect x="398.4" y="695.6" width="30" height="28" rx="2.2" fill="#e06a00" opacity=".55" filter="url(#sh1)"/>
<rect x="400" y="694" width="30" height="28" rx="2.2" fill="#fff6f2"/>
<text x="415.1" y="712.9" font-size="14" font-weight="bold" fill="#f58a16" text-anchor="middle" textLength="12.4" lengthAdjust="spacingAndGlyphs">W</text>
<path d="M394.4 695.6 Q394 684.6 406.8 683 V678.2 L414 685.4 L407.6 693.4 V688.8 Q398.4 688.4 394.4 695.6 Z" fill="#fff3e6"/>
</svg>
<svg style="left:728px;top:671px" width="70" height="70" viewBox="728 671 70 70">
<rect x="748.4" y="695.6" width="30" height="28" rx="2.2" fill="#d02a24" opacity=".5" filter="url(#sh1)"/>
<rect x="750" y="694" width="30" height="28" rx="2.2" fill="#fff6f2"/>
<circle cx="759.5" cy="700.7" r="3.4" fill="#f8675f"/>
<path d="M752.8 718.1 L759.1 708.4 L764.5 712 L774.8 701.2 L776 702.2 V718.1 Z" fill="#f8675f"/>
<path d="M744.4 695.6 Q744 684.6 756.8 683 V678.2 L764 685.4 L757.6 693.4 V688.8 Q748.4 688.4 744.4 695.6 Z" fill="#fff0ec"/>
</svg>
<svg style="left:1078px;top:671px" width="70" height="70" viewBox="1078 671 70 70" font-family="'Liberation Sans',sans-serif">
<rect x="1095.8" y="691" width="33" height="35" rx="3" fill="#1f5fc8" opacity=".6" filter="url(#sh1)"/>
<path d="M1100.4 689 H1121.2 L1130.5 697.1 V721.1 Q1130.5 723.7 1127.9 723.7 H1100.4 Q1097.8 723.7 1097.8 721.1 V691.6 Q1097.8 689 1100.4 689 Z" fill="#fff4f0"/>
<path d="M1121.2 689 V694.6 Q1121.2 697.1 1123.8 697.1 H1130.5 Z" fill="#fffaf8" stroke="#f3c9c0" stroke-width="0.5"/>
<text x="1101.8" y="706.7" font-size="9" font-weight="bold" fill="#4fa8ee" textLength="18.4" lengthAdjust="spacingAndGlyphs">PDF</text>
<path d="M1102 711.1 H1121.7 M1102 715 H1118.8 M1102 718.6 H1115.8" stroke="#4f8ed0" stroke-width="1.2"/>
</svg>


<div class="t ft" style="left:461px;top:503px"><span style="letter-spacing:-0.6px">PDF</span>编辑</div>
<div class="t fs" style="left:461px;top:536px">添加、删除、注释、绘图</div>
<div class="t ft" style="left:811px;top:503px"><span style="letter-spacing:-0.9px">OCR</span>文字识别</div>
<div class="t fs" style="left:811px;top:536px">将文档转换为可编辑的PDF文件</div>
<div class="t ft" style="left:1161px;top:503px">合并文档</div>
<div class="t fs" style="left:1161px;top:536px">快速批量合并文档</div>
<div class="t ft" style="left:461px;top:682px"><span style="letter-spacing:-0.6px">PDF</span>转<span style="letter-spacing:1.2px">Word</span></div>
<div class="t fs" style="left:461px;top:715px">PDF格式文档转换为Word</div>
<div class="t ft" style="left:811px;top:682px"><span style="letter-spacing:-0.6px">PDF</span>转图片</div>
<div class="t fs" style="left:811px;top:715px">PDF格式文档转换为图片</div>
<div class="t ft" style="left:1161px;top:682px">转换为<span style="letter-spacing:-0.6px">PDF</span></div>
<div class="t fs" style="left:1161px;top:715px">多种文件格式转换为PDF</div>

<div class="abs" style="left:970px;top:474px;width:34px;height:17px;background:#fbb02d;border-radius:4px 0 0 4px"></div>
<div class="t" style="left:987.1px;top:476.5px;font-size:12px;font-weight:bold;color:#fff;transform:translateX(-50%) scaleX(0.9)">NEW</div>

<div class="abs" style="left:800px;top:810px;width:102px;height:28px;border:1px solid #b8b8b8;border-radius:14px"></div>
<div class="t" style="left:851px;top:819.3px;font-size:12px;color:#555;transform:translateX(-50%)">查看全部特权</div>


<!-- STATUS -->
<!-- status bar -->
<svg style="left:607px;top:867px" width="14" height="14" viewBox="0 0 14 14"><path d="M8.6 0.6 V13 L0.6 6.8 Z" fill="#a6a6a6"/><rect x="10.4" y="0.8" width="2.2" height="12" fill="#a6a6a6"/></svg>
<svg style="left:634px;top:867px" width="9" height="14" viewBox="0 0 9 14"><path d="M8.4 0.6 V13 L0.6 6.8 Z" fill="#a6a6a6"/></svg>
<div class="abs" style="left:654px;top:863px;width:115px;height:20px;background:#fff;border:1px solid #a8a8a8"></div>
<svg style="left:758px;top:872px" width="6" height="3" viewBox="0 0 6 3"><path d="M0 0 H6 L3 3 Z" fill="#7a7a7a"/></svg>
<svg style="left:777px;top:867px" width="9" height="14" viewBox="0 0 9 14"><path d="M0.6 0.6 V13 L8.4 6.8 Z" fill="#a6a6a6"/></svg>
<svg style="left:800px;top:867px" width="14" height="14" viewBox="0 0 14 14"><rect x="1.2" y="0.8" width="2.2" height="12" fill="#a6a6a6"/><path d="M5.4 0.6 V13 L13.4 6.8 Z" fill="#a6a6a6"/></svg>
<svg style="left:824px;top:865px" width="18" height="17" viewBox="0 0 18 17"><path d="M8 1.4 H1.6 V9.4 H5" fill="none" stroke="#c4c4c4" stroke-width="1"/><path d="M1.2 1.4 H8.4" stroke="#a9c3e3" stroke-width="1.6"/><rect x="6.6" y="7.6" width="10" height="8.4" fill="#f4f4f4" stroke="#c4c4c4" stroke-width="1"/><path d="M15.6 4.4 H10.4 M12.4 2.2 L10.2 4.4 L12.4 6.6" fill="none" stroke="#bcdccf" stroke-width="1.5"/></svg>
<svg style="left:850px;top:865px" width="18" height="17" viewBox="0 0 18 17"><path d="M10 5.4 V1.4 H1.6 V7.6 H4" fill="none" stroke="#c4c4c4" stroke-width="1"/><path d="M1.2 1.4 H10.4" stroke="#c4c4c4" stroke-width="1.6"/><rect x="6.6" y="7.6" width="10" height="8.4" fill="#f4f4f4" stroke="#c4c4c4" stroke-width="1"/><path d="M6.2 7.4 H17" stroke="#a9c3e3" stroke-width="1.6"/><path d="M1 12 H6 M4 9.8 L6.2 12 L4 14.2" fill="none" stroke="#bcdccf" stroke-width="1.5"/></svg>

<svg style="left:1144px;top:866px" width="16" height="14" viewBox="0 0 16 14"><ellipse cx="7.6" cy="7" rx="6.8" ry="6" fill="#f6f6f6" stroke="#d0d0d0" stroke-width="1"/><path d="M6.4 3.4 A3.8 3.8 0 1 0 11.4 8.6 A4 4 0 0 1 6.4 3.4 Z" fill="#b9cde6"/></svg>
<svg style="left:1164px;top:872px" width="6" height="3" viewBox="0 0 6 3"><path d="M0 0 H6 L3 3 Z" fill="#8a8a8a"/></svg>
<svg style="left:1178px;top:866px" width="12" height="15" viewBox="0 0 12 15"><rect x="0.5" y="0.5" width="10.6" height="13.6" fill="none" stroke="#cdcdcd" stroke-width="1"/><path d="M2.6 4 H9 M2.6 6.6 H9 M2.6 9.2 H9 M2.6 11.6 H9" stroke="#d6d6d6" stroke-width="0.9"/></svg>
<svg style="left:1204px;top:866px" width="12" height="21" viewBox="0 0 12 21"><rect x="0.5" y="0.5" width="10.6" height="10.4" fill="none" stroke="#cdcdcd" stroke-width="1"/><path d="M2.6 4 H9 M2.6 6.4 H9 M2.6 8.6 H9" stroke="#d6d6d6" stroke-width="0.9"/><path d="M0.5 21 V13.4 H11.1 V21" fill="none" stroke="#cdcdcd" stroke-width="1"/><path d="M2.6 16 H9" stroke="#d6d6d6" stroke-width="0.9"/></svg>
<svg style="left:1229px;top:866px" width="16" height="15" viewBox="0 0 16 15"><rect x="0.5" y="0.5" width="6.4" height="13.6" fill="none" stroke="#cdcdcd" stroke-width="1"/><rect x="8.4" y="0.5" width="6.4" height="13.6" fill="none" stroke="#cdcdcd" stroke-width="1"/><path d="M2 4 H5.4 M2 6.6 H5.4 M2 9.2 H5.4 M2 11.6 H5.4 M10 4 H13.4 M10 6.6 H13.4 M10 9.2 H13.4 M10 11.6 H13.4" stroke="#d6d6d6" stroke-width="0.9"/></svg>
<svg style="left:1254px;top:866px" width="16" height="21" viewBox="0 0 16 21"><path d="M0.5 0.5 H6.9 V10.8 H0.5 M8.4 0.5 H14.8 M8.4 0.5 V10.8 H14.8 M0.5 13.4 H6.9 V21 M8.4 21 V13.4 H14.8" fill="none" stroke="#cdcdcd" stroke-width="1"/><path d="M1 3.6 H5.4 M1 6 H5.4 M1 8.4 H5.4 M10 3.6 H15 M10 6 H15 M10 8.4 H15 M1 16 H5.4 M10 16 H15" stroke="#d6d6d6" stroke-width="0.9"/></svg>
<div class="t" style="left:1298px;top:868px;font-size:12px;letter-spacing:0.5px;color:#1c1c3c">100%</div>
<svg style="left:1354px;top:872px" width="6" height="3" viewBox="0 0 6 3"><path d="M0 0 H6 L3 3 Z" fill="#8a8a8a"/></svg>
<svg style="left:1364px;top:865px" width="16" height="16" viewBox="0 0 16 16"><circle cx="7.6" cy="7.8" r="6.8" fill="#f8f8f8" stroke="#333" stroke-width="1.1"/><path d="M4 7.8 H11.2" stroke="#333" stroke-width="1.2"/></svg>
<div class="abs" style="left:1386px;top:873px;width:91px;height:1px;background:#222"></div>
<div class="abs" style="left:1429px;top:868px;width:4px;height:9px;background:#222"></div>
<svg style="left:1482px;top:865px" width="16" height="16" viewBox="0 0 16 16"><circle cx="7.6" cy="7.8" r="6.8" fill="#f8f8f8" stroke="#333" stroke-width="1.1"/><path d="M4 7.8 H11.2 M7.6 4.2 V11.4" stroke="#333" stroke-width="1.2"/></svg>
<svg style="left:1503px;top:866px" width="13" height="13" viewBox="0 0 13 13"><path d="M0.4 12.4 L12.4 0.4 M4.6 12.4 L12.4 4.6 M8.6 12.4 L12.4 8.6" stroke="#444" stroke-width="1"/></svg>
<!-- scroll arrows -->
<svg style="left:1504px;top:196px" width="13" height="10" viewBox="0 0 13 10"><path d="M1.2 8 L6.5 2.6 L11.8 8" fill="none" stroke="#505050" stroke-width="2.4"/></svg>
<svg style="left:1504px;top:836px" width="13" height="10" viewBox="0 0 13 10"><path d="M1.2 2 L6.5 7.4 L11.8 2" fill="none" stroke="#505050" stroke-width="2.4"/></svg>

</div>
</body>
</html>
